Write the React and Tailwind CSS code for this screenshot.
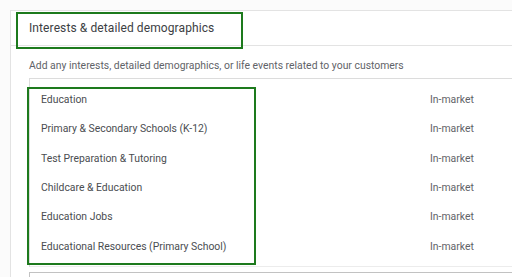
const rows = [
    'Education',
    'Primary & Secondary Schools (K-12)',
    'Test Preparation & Tutoring',
    'Childcare & Education',
    'Education Jobs',
    'Educational Resources (Primary School)',
];

export default function App() {
    return (
        <div className="relative w-[512px] h-[277px] overflow-hidden bg-[#fbfbfb] font-['Roboto','Liberation_Sans',sans-serif]">
            <div className="ml-[10px] mt-[10px] w-[520px] bg-white border-l border-t border-[#e3e3e3]">
                {/* Header */}
                <div className="h-[35px] flex items-center pl-[18px] border-b border-[#e3e3e3]">
                    <span className="text-[12px] text-[#3c4043] tracking-[0.1px]">Interests &amp; detailed demographics</span>
                </div>

                {/* Description */}
                <p className="pt-[13px] pb-[5px] pl-[18px] text-[10.4px] leading-[14px] text-[#5f6368]">
                    Add any interests, detailed demographics, or life events related to your customers
                </p>

                {/* List */}
                <div className="ml-[18px] border-t border-l border-[#dcdcdc]">
                    <div className="pt-[6px] pb-[5px] border-b border-[#ececec]">
                        {rows.map((r) => (
                            <div key={r} className="h-[29.4px] flex items-center pl-[11px] text-[10.4px] text-[#4a4d51]">
                                <span className="w-[389px]">{r}</span>
                                <span className="text-[#5f6368]">In-market</span>
                            </div>
                        ))}
                    </div>
                </div>
                <div className="ml-[18px] mt-[5px] h-[12px] border-t border-l border-[#c2c2c2]" />
            </div>

            {/* Highlight boxes */}
            <div className="absolute left-[16px] top-[12px] w-[227px] h-[37px] border-2 border-[#1d7a1d]" />
            <div className="absolute left-[27px] top-[87px] w-[229px] h-[178px] border-2 border-[#1d7a1d]" />
        </div>
    );
}
